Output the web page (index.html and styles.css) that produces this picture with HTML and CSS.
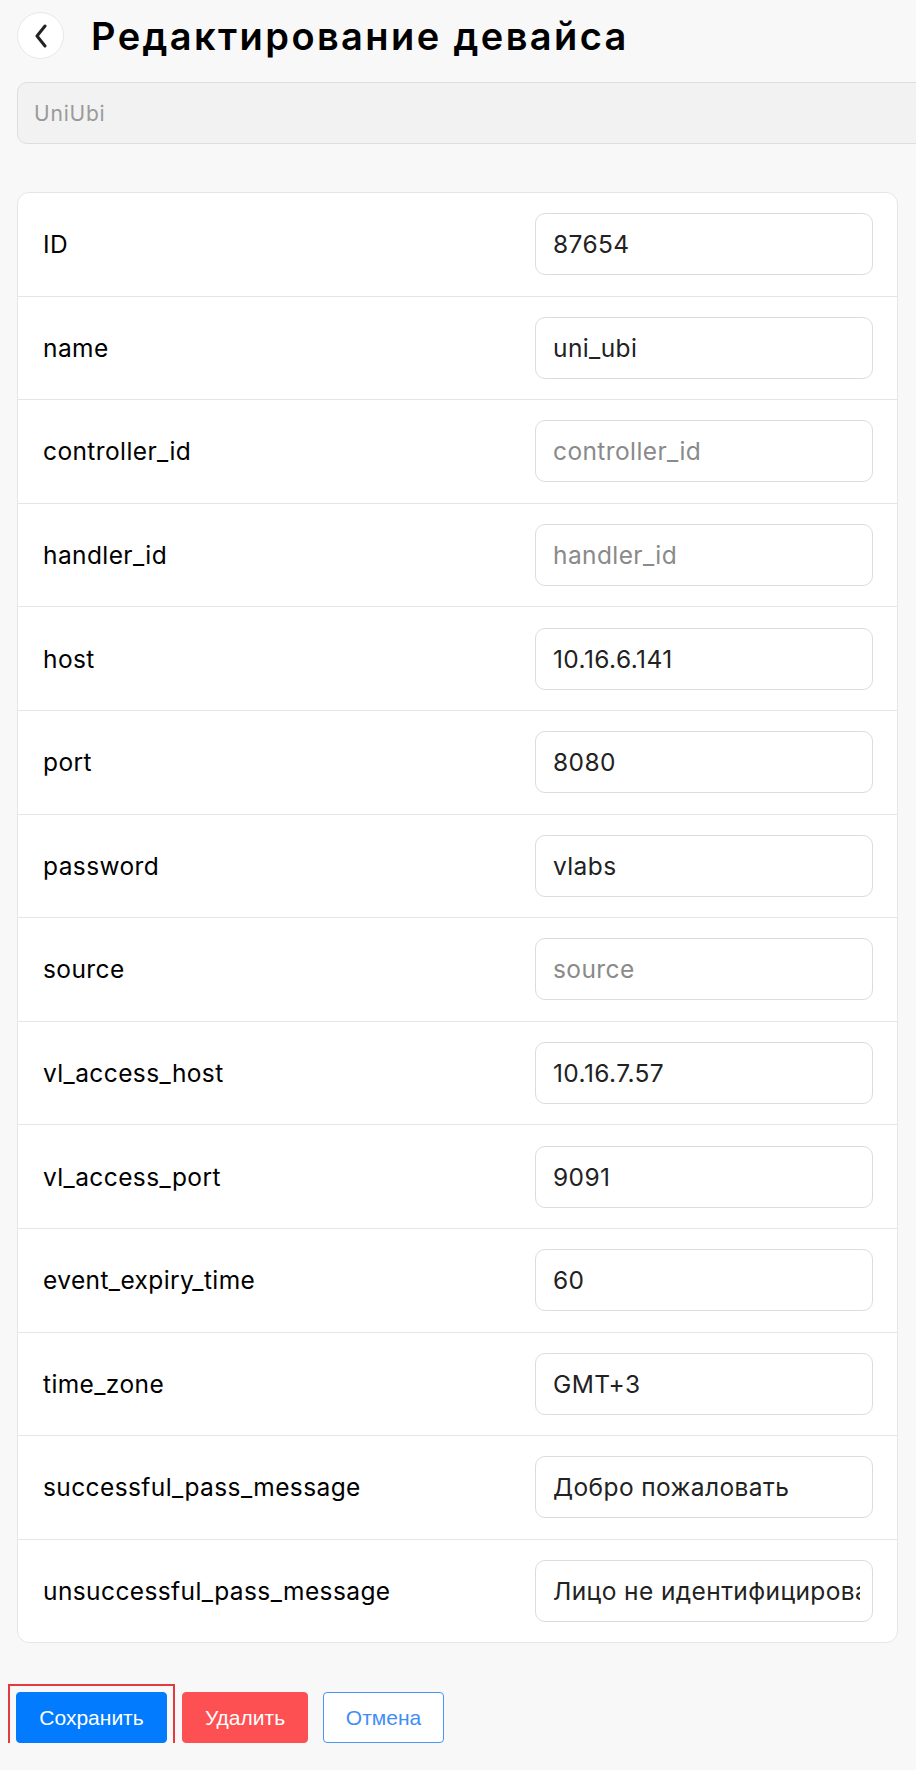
FILE: index.html
```html
<!DOCTYPE html>
<html lang="ru">
<head>
<meta charset="utf-8">
<title>Редактирование девайса</title>
<link rel="stylesheet" href="styles.css">
</head>
<body>
<div class="page">
  <header class="header">
    <button class="back" aria-label="Назад">
      <svg width="14" height="24" viewBox="0 0 14 24"><path d="M11 2 L3 12 L11 22" fill="none" stroke="#222" stroke-width="3" stroke-linecap="round" stroke-linejoin="round"/></svg>
    </button>
    <h1 class="title">Редактирование девайса</h1>
  </header>

  <div class="type-field">UniUbi</div>

  <div class="card">
    <div class="row"><span class="label">ID</span><input class="field" value="87654"></div>
    <div class="row"><span class="label">name</span><input class="field" value="uni_ubi"></div>
    <div class="row"><span class="label">controller_id</span><input class="field" placeholder="controller_id"></div>
    <div class="row"><span class="label">handler_id</span><input class="field" placeholder="handler_id"></div>
    <div class="row"><span class="label">host</span><input class="field" value="10.16.6.141"></div>
    <div class="row"><span class="label">port</span><input class="field" value="8080"></div>
    <div class="row"><span class="label">password</span><input class="field" value="vlabs"></div>
    <div class="row"><span class="label">source</span><input class="field" placeholder="source"></div>
    <div class="row"><span class="label">vl_access_host</span><input class="field" value="10.16.7.57"></div>
    <div class="row"><span class="label">vl_access_port</span><input class="field" value="9091"></div>
    <div class="row"><span class="label">event_expiry_time</span><input class="field" value="60"></div>
    <div class="row"><span class="label">time_zone</span><input class="field" value="GMT+3"></div>
    <div class="row"><span class="label">successful_pass_message</span><input class="field" value="Добро пожаловать"></div>
    <div class="row"><span class="label">unsuccessful_pass_message</span><input class="field" value="Лицо не идентифицировано"></div>
  </div>

  <div class="actions">
    <button class="btn btn-save">Сохранить</button>
    <button class="btn btn-delete">Удалить</button>
    <button class="btn btn-cancel">Отмена</button>
  </div>
</div>
</body>
</html>
```

FILE: styles.css
```css
html, body {
  margin: 0;
  padding: 0;
  background: #f8f8f8;
  overflow-x: hidden;
}
body {
  font-family: "Inter", "DejaVu Sans", sans-serif;
  color: #111;
}
.page {
  padding: 12px 0 0 17px;
}
.header {
  display: flex;
  align-items: center;
  height: 47px;
}
.back {
  width: 47px;
  height: 47px;
  border-radius: 50%;
  border: 1px solid #e8e8e8;
  background: #fff;
  display: flex;
  align-items: center;
  justify-content: center;
  padding: 0;
  margin: 0;
}
.title {
  margin: 0 0 0 27px;
  font-size: 38px;
  font-weight: 600;
  color: #000;
  letter-spacing: 2.4px;
}
.type-field {
  margin-top: 23px;
  width: 940px;
  height: 62px;
  box-sizing: border-box;
  background: #f2f2f2;
  border: 1px solid #dedede;
  border-radius: 10px;
  display: flex;
  align-items: center;
  padding-left: 16px;
  font-size: 21px;
  letter-spacing: 0.8px;
  color: #9a9a9a;
}
.card {
  margin-top: 48px;
  width: 881px;
  box-sizing: border-box;
  background: #fff;
  border: 1px solid #e6e6e6;
  border-radius: 12px;
}
.row {
  display: flex;
  align-items: center;
  justify-content: space-between;
  padding: 20.3px 24px 20.3px 25px;
  border-bottom: 1px solid #e6e6e6;
}
.row:last-child {
  border-bottom: none;
}
.label {
  font-size: 24.5px;
  letter-spacing: 0.4px;
  color: #000;
}
.field {
  width: 338px;
  height: 62px;
  box-sizing: border-box;
  border: 1px solid #dcdcdc;
  border-radius: 10px;
  background: #fff;
  padding: 0 12px 0 17px;
  font-family: "Inter", "DejaVu Sans", sans-serif;
  font-size: 24.5px;
  letter-spacing: 0.4px;
  color: #222;
  outline: none;
}
.field::placeholder {
  color: #8a8a8a;
}
.actions {
  display: flex;
  gap: 15px;
  margin-top: 49px;
  margin-left: -1px;
}
.btn {
  height: 51px;
  border-radius: 4px;
  font-family: "Liberation Sans", Arial, sans-serif;
  font-size: 21px;
  padding: 0;
  cursor: pointer;
}
.btn-save {
  position: relative;
  width: 151px;
  background: #027bfe;
  color: #fff;
  border: 1px solid #027bfe;
}
.btn-save::after {
  content: "";
  position: absolute;
  top: -9px;
  left: -9px;
  right: -9px;
  bottom: -9px;
  border: 2px solid #e23a3e;
}
.btn-delete {
  width: 126px;
  background: #fd5052;
  color: #fff;
  border: 1px solid #fd5052;
}
.btn-cancel {
  width: 121px;
  background: #fff;
  color: #3f8ef6;
  border: 1px solid #4a95f7;
}
```
